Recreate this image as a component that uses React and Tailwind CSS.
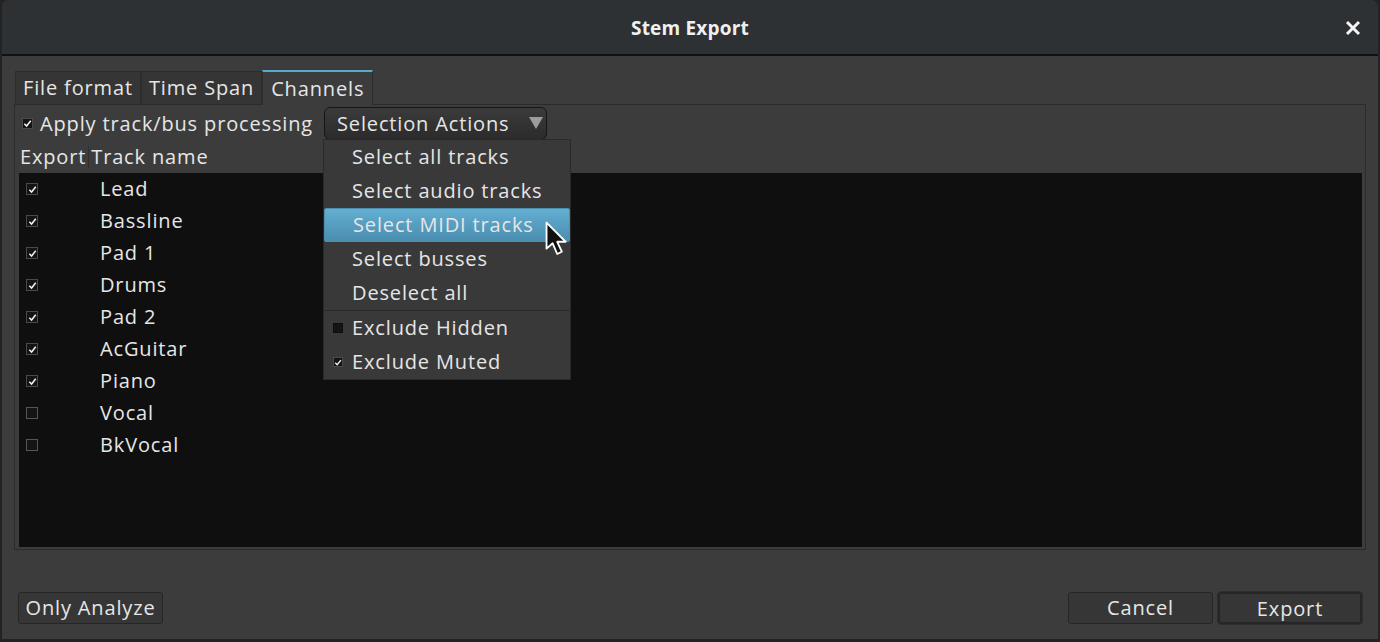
import { useState } from "react";

const tracks = [
  { name: "Lead", on: true },
  { name: "Bassline", on: true },
  { name: "Pad 1", on: true },
  { name: "Drums", on: true },
  { name: "Pad 2", on: true },
  { name: "AcGuitar", on: true },
  { name: "Piano", on: true },
  { name: "Vocal", on: false },
  { name: "BkVocal", on: false },
];

const menuItems = ["Select all tracks", "Select audio tracks", "Select MIDI tracks", "Select busses", "Deselect all"];

function Check({ on, size = "w-[12px] h-[12px]", border = "border-[#555]" }) {
  return (
    <span className={`${size} flex items-center justify-center bg-[#141414] border ${on ? "border-[#4a4a4a]" : border}`}>
      {on && (
        <svg viewBox="0 0 10 10" className="w-[9px] h-[9px]">
          <path d="M1.5 5.2 L4 7.8 L8.6 2" fill="none" stroke="#f2f2f2" strokeWidth="1.7" />
        </svg>
      )}
    </span>
  );
}

function Tab({ label, active }) {
  if (active) {
    return (
      <div className="h-[35px] px-[8px] flex items-center bg-[#3c3c3c] border-t-2 border-t-[#5aaad0] border-x border-x-[#2c2c2c] -mb-px relative z-10">
        {label}
      </div>
    );
  }
  return (
    <div className="h-[33px] px-[7px] flex items-center bg-[#353535] border border-[#2c2c2c] border-b-0">
      {label}
    </div>
  );
}

export default function App() {
  const [rows] = useState(tracks);

  return (
    <div className="w-[1380px] h-[642px] bg-[#232323] px-[2px] pb-[3px] text-[#e6e6e6] text-[20px] tracking-[0.85px] overflow-hidden" style={{ fontFamily: '"Open Sans", "Noto Sans", sans-serif' }}>
      <div className="h-full flex flex-col rounded-t-[6px] overflow-hidden">
        <div className="h-[56px] shrink-0 bg-[#2d3134] border-b-2 border-[#121212] flex items-center pt-[3px] relative">
          <div className="flex-1 text-center font-bold text-[19px] tracking-[0.2px] text-[#f0f0f0]">Stem Export</div>
          <svg viewBox="0 0 16 16" className="absolute right-[17px] top-[20px] w-[16px] h-[16px]">
            <path d="M2 2 L14 14 M14 2 L2 14" stroke="#f4f4f4" strokeWidth="3" />
          </svg>
        </div>

        <div className="flex-1 bg-[#3c3c3c] flex flex-col pt-[13px] px-[12px] pb-[15px]">
          <div className="flex items-end h-[35px]">
            <div className="ml-px flex items-end">
              <Tab label="File format" />
              <Tab label="Time Span" />
              <Tab label="Channels" active />
            </div>
          </div>

          <div className="h-[446px] border border-[#2b2b2b] flex flex-col">
            <div className="h-[36px] flex items-center pl-[7px] pt-[1px]">
              <Check on size="w-[11px] h-[11px]" />
              <span className="ml-[7px]">Apply track/bus processing</span>
              <div className="relative ml-[11px]">
                <div className="w-[223px] h-[33px] rounded-[6px] border border-[#151515] bg-gradient-to-b from-[#3b3b3b] to-[#2b2b2b] flex items-center pl-[12px]">
                  Selection Actions
                  <svg viewBox="0 0 14 12" className="absolute right-[4px] top-[10px] w-[14px] h-[12px]">
                    <path d="M0 0 L14 0 L7 12 Z" fill="#9c9c9c" />
                  </svg>
                </div>

                <div className="absolute left-[-1px] top-[32px] w-[248px] bg-[#393939] border border-[#2a2a2a] z-20 flex flex-col">
                  {menuItems.map((m, i) => (
                    <div
                      key={m}
                      className={`h-[34px] flex items-center pl-[28px] ${i === 2 ? "bg-gradient-to-b from-[#63afd2] to-[#4a8db0] rounded-[2px] border border-[#4c8fb0]" : ""}`}
                    >
                      {m}
                    </div>
                  ))}
                  <div className="h-px bg-[#2a2a2a]" />
                  <div className="h-[34px] flex items-center pl-[9px]">
                    <span className="w-[10px] h-[10px] bg-[#151515] border border-[#0c0c0c]" />
                    <span className="ml-[9px]">Exclude Hidden</span>
                  </div>
                  <div className="h-[34px] flex items-center pl-[9px]">
                    <Check on size="w-[10px] h-[10px]" />
                    <span className="ml-[9px]">Exclude Muted</span>
                  </div>

                  <svg viewBox="0 0 17 26" className="absolute left-[221px] top-[81px] w-[26px] h-[40px]">
                    <path d="M1 1 L1 18 L5 14.5 L8 21.5 L11 20 L8 13.5 L13.5 13.5 Z" fill="#111" stroke="#fff" strokeWidth="1.2" strokeLinejoin="round" />
                  </svg>
                </div>
              </div>
            </div>

            <div className="h-[32px] flex items-center pl-[5px]">
              <span>Export</span>
              <span className="w-px h-[22px] bg-[#2e2e2e] mx-[2px]" />
              <span>Track name</span>
            </div>

            <div className="flex-1 bg-[#0f0f0f] ml-[4px] mr-[3px] mb-[2px] flex flex-col">
              {rows.map((t) => (
                <div key={t.name} className="h-[32px] shrink-0 flex items-center">
                  <span className="ml-[7px]"><Check on={t.on} /></span>
                  <span className="ml-[62px]">{t.name}</span>
                </div>
              ))}
            </div>
          </div>

          <div className="flex-1" />

          <div className="flex items-center px-[4px]">
            <button className="w-[145px] h-[32px] rounded-[3px] border border-[#262626] bg-[#363636]">Only Analyze</button>
            <div className="flex-1" />
            <button className="w-[145px] h-[32px] rounded-[3px] border border-[#262626] bg-[#363636]">Cancel</button>
            <button className="ml-[5px] w-[144px] h-[32px] rounded-[3px] border-2 border-[#262626] outline outline-1 outline-[#2e2e2e] bg-[#363636]">Export</button>
          </div>
        </div>
      </div>
    </div>
  );
}
